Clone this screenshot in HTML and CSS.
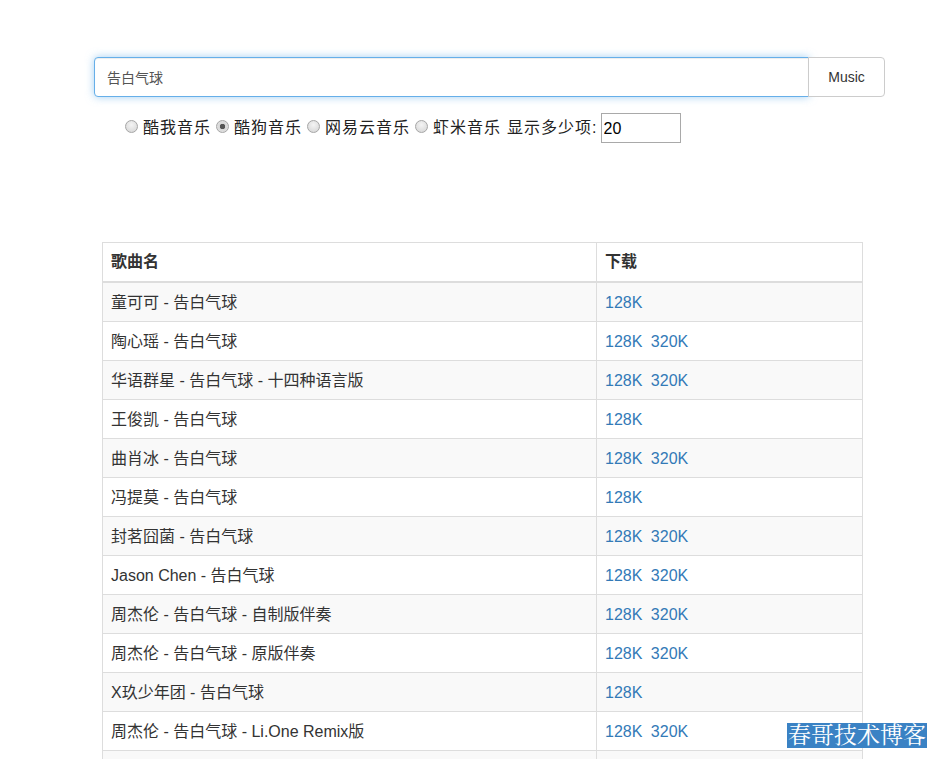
FILE: index.html
```html
<!DOCTYPE html>
<html lang="zh">
<head>
<meta charset="utf-8">
<title>Music</title>
<link rel="stylesheet" href="styles.css">
</head>
<body>
<div class="search">
  <input class="search-input" type="text" value="告白气球">
  <button class="search-btn" type="button">Music</button>
</div>
<div class="options">
  <label class="opt"><input type="radio" name="src" class="radio">酷我音乐</label>
  <label class="opt"><input type="radio" name="src" class="radio" checked>酷狗音乐</label>
  <label class="opt"><input type="radio" name="src" class="radio">网易云音乐</label>
  <label class="opt"><input type="radio" name="src" class="radio">虾米音乐</label>
  <span class="opt opt-count">显示多少项:</span>
  <input class="num" type="text" value="20">
</div>
<table class="songs">
  <thead>
    <tr><th class="c1">歌曲名</th><th class="c2">下载</th></tr>
  </thead>
  <tbody>
    <tr><td>童可可 - 告白气球</td><td><a href="#">128K</a></td></tr>
    <tr><td>陶心瑶 - 告白气球</td><td><a href="#">128K</a> <a href="#">320K</a></td></tr>
    <tr><td>华语群星 - 告白气球 - 十四种语言版</td><td><a href="#">128K</a> <a href="#">320K</a></td></tr>
    <tr><td>王俊凯 - 告白气球</td><td><a href="#">128K</a></td></tr>
    <tr><td>曲肖冰 - 告白气球</td><td><a href="#">128K</a> <a href="#">320K</a></td></tr>
    <tr><td>冯提莫 - 告白气球</td><td><a href="#">128K</a></td></tr>
    <tr><td>封茗囧菌 - 告白气球</td><td><a href="#">128K</a> <a href="#">320K</a></td></tr>
    <tr><td>Jason Chen - 告白气球</td><td><a href="#">128K</a> <a href="#">320K</a></td></tr>
    <tr><td>周杰伦 - 告白气球 - 自制版伴奏</td><td><a href="#">128K</a> <a href="#">320K</a></td></tr>
    <tr><td>周杰伦 - 告白气球 - 原版伴奏</td><td><a href="#">128K</a> <a href="#">320K</a></td></tr>
    <tr><td>X玖少年团 - 告白气球</td><td><a href="#">128K</a></td></tr>
    <tr><td>周杰伦 - 告白气球 - Li.One Remix版</td><td><a href="#">128K</a> <a href="#">320K</a></td></tr>
    <tr class="empty"><td></td><td></td></tr>
  </tbody>
</table>
<div class="watermark">春哥技术博客</div>
</body>
</html>
```
FILE: styles.css
```css
html, body {
  margin: 0;
  padding: 0;
  background: #fff;
}
body {
  font-family: "Liberation Sans", "Noto Sans CJK SC", sans-serif;
  font-size: 14px;
  color: #333;
  overflow: hidden;
}
.search {
  display: flex;
  margin: 57px 0 0 94px;
  width: 791px;
  height: 40px;
}
.search-input {
  flex: 1;
  box-sizing: border-box;
  height: 40px;
  margin: 0;
  padding: 0 12px;
  border: 1px solid #66afe9;
  border-radius: 4px 0 0 4px;
  box-shadow: inset 0 1px 1px rgba(0,0,0,.075), 0 0 8px rgba(102,175,233,.6);
  font-family: "Liberation Sans", "Noto Sans CJK SC", sans-serif;
  font-size: 14px;
  color: #555;
  outline: none;
}
.search-btn {
  box-sizing: border-box;
  width: 77px;
  height: 40px;
  margin: 0 0 0 -1px;
  padding: 0;
  border: 1px solid #ccc;
  border-radius: 0 4px 4px 0;
  background: #fff;
  font-family: "Liberation Sans", "Noto Sans CJK SC", sans-serif;
  font-size: 14px;
  color: #333;
}
.options {
  display: flex;
  align-items: center;
  height: 30px;
  margin: 16px 0 0 124px;
  font-size: 16px;
  color: #222;
}
.opt {
  display: flex;
  align-items: center;
  margin: 0 4px 4px 0;
  letter-spacing: 1px;
  white-space: pre;
}
.opt-count {
  margin-left: 2px;
  margin-right: 3px;
}
.radio {
  appearance: none;
  -webkit-appearance: none;
  box-sizing: border-box;
  width: 13px;
  height: 13px;
  margin: 0 5px 0 1px;
  border: 1px solid #a6a6a6;
  border-radius: 50%;
  background: radial-gradient(circle at 50% 35%, #f4f4f4, #d3d3d3);
}
.radio:checked {
  background: radial-gradient(circle, #555 0, #555 2.5px, #d8d8d8 3px, #e6e6e6 100%);
}
.num {
  box-sizing: border-box;
  width: 80px;
  height: 30px;
  margin: 0;
  padding: 2px 2px 0;
  border: 1px solid #a9a9a9;
  font-family: "Liberation Sans", sans-serif;
  font-size: 16px;
  color: #000;
  outline: none;
}
.songs {
  margin: 99px 0 0 102px;
  width: 761px;
  border-collapse: collapse;
  border: 1px solid #ddd;
}
.songs th, .songs td {
  padding: 9px 8px 7px;
  line-height: 22px;
  text-align: left;
  vertical-align: top;
  border: 1px solid #ddd;
  font-size: 16px;
}
.songs th {
  padding: 8px 8px;
  border-bottom: 2px solid #ddd;
  font-weight: bold;
  color: #333;
}
.songs td {
  color: #333;
}
.songs .empty td {
  height: 22px;
}
.c1 { width: 477px; }
.songs tbody tr:nth-child(odd) td {
  background: #f9f9f9;
}
.songs a {
  color: #337ab7;
  text-decoration: none;
  margin-right: 4px;
}
.watermark {
  position: fixed;
  right: 10px;
  top: 723px;
  height: 25px;
  padding: 0 1px;
  background: #3a82c4;
  color: #fff;
  font-family: "Liberation Serif", "Noto Serif CJK SC", "Noto Sans CJK SC", serif;
  font-size: 23px;
  line-height: 25px;
}
```
